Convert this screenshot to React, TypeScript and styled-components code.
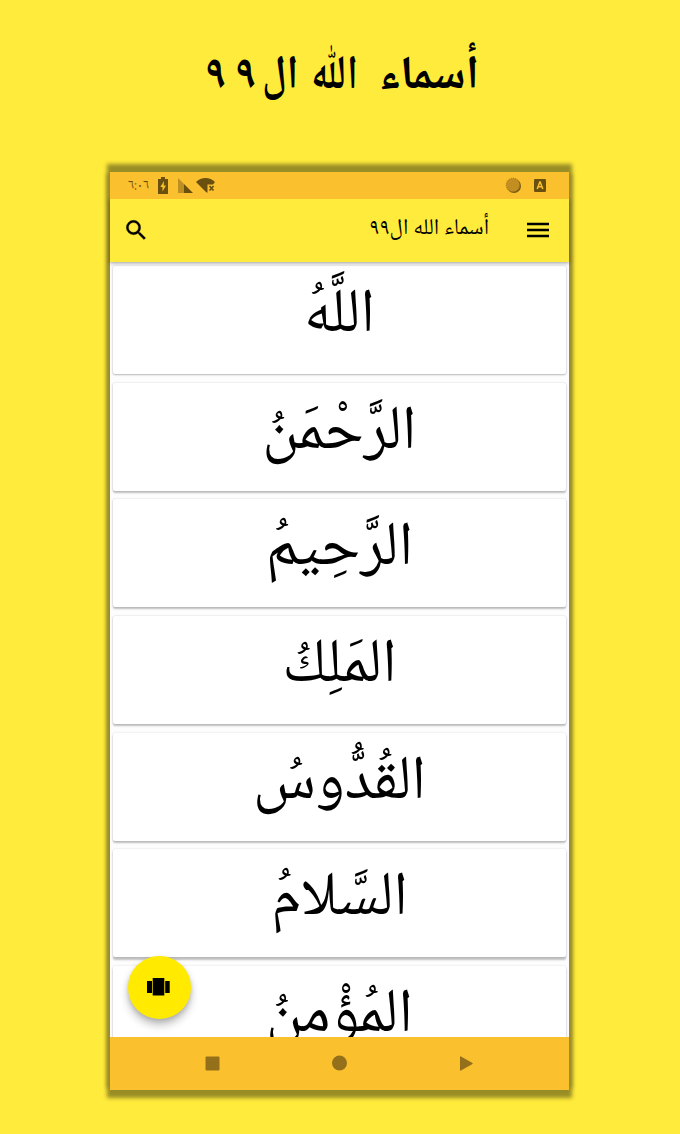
import React from "react";
import styled, { createGlobalStyle } from "styled-components";

const arabic = `"Noto Naskh Arabic", "Noto Sans Arabic", "DejaVu Sans", sans-serif`;

const Global = createGlobalStyle`
  *, *::before, *::after { box-sizing: border-box; }
  body { margin: 0; background: #ffeb3b; font-family: ${arabic}; color: #000; }
`;

const Page = styled.main`
  width: 680px;
  height: 1134px;
  overflow: hidden;
  background: #ffeb3b;
  display: flex;
  flex-direction: column;
`;

const Heading = styled.h1`
  margin: 0;
  height: 172px;
  padding: 33px 201px 0 0;
  display: flex;
  align-items: flex-start;
  font-size: 47px;
  line-height: 90px;
  white-space: nowrap;
`;

const Word = styled.span<{ $gap?: number; $squeeze?: number }>`
  margin-right: ${(p) => p.$gap ?? 0}px;
  transform: scaleX(${(p) => p.$squeeze ?? 1});
  transform-origin: right;
`;

const Phone = styled.section`
  position: relative;
  width: 459px;
  height: 918px;
  margin-left: 110px;
  display: flex;
  flex-direction: column;
  background: #fdfdfd;
  box-shadow: 0 -5px 4px 3px #998d26, 0 5px 4px 3px #998d26;
`;

const StatusBar = styled.div`
  position: relative;
  z-index: 2;
  height: 27px;
  flex: none;
  display: flex;
  align-items: center;
  padding: 0 22px 0 18px;
  background: #fbc02d;
  color: #69500f;
`;

const Clock = styled.span`
  width: 23px;
  padding-top: 2px;
  font-size: 13.5px;
  line-height: 25px;
  white-space: nowrap;
`;

const StatusIcon = styled.svg<{ $gap: number }>`
  flex: none;
  margin-left: ${(p) => p.$gap}px;
`;

const Spacer = styled.div`
  flex: 1;
`;

const AppBar = styled.header`
  height: 63px;
  flex: none;
  display: flex;
  align-items: center;
  padding: 0 20px 2px 13px;
  background: #ffeb3b;
  box-shadow: 0 1px 4px rgba(0, 0, 0, 0.4);
  z-index: 1;
`;

const SearchIcon = styled.svg`
  margin-top: 1px;
`;

const Title = styled.span`
  padding-bottom: 1px;
  margin-right: 38px;
  font-size: 22.5px;
  line-height: 40px;
  white-space: nowrap;
`;

const List = styled.div`
  flex: 1;
  min-height: 0;
  overflow: hidden;
  padding: 4px 3px 0;
  display: flex;
  flex-direction: column;
  gap: 8.7px;
`;

const Card = styled.article<{ $depth: number }>`
  flex: none;
  height: 108px;
  padding-top: 7px;
  text-align: center;
  font-size: 62px;
  line-height: 90px;
  white-space: nowrap;
  background: #fff;
  border-radius: 2px;
  box-shadow: 0 ${(p) => p.$depth}px 2px rgba(0, 0, 0, 0.24), 0 0 2px rgba(0, 0, 0, 0.16);
`;

const NavBar = styled.nav`
  height: 53px;
  flex: none;
  display: flex;
  align-items: center;
  justify-content: space-between;
  padding: 0 95px 1px;
  background: #fbc02d;
`;

const Fab = styled.button`
  position: absolute;
  left: 18px;
  top: 784px;
  width: 62.5px;
  height: 62.5px;
  padding: 0 1px 1px 0;
  border: 0;
  border-radius: 50%;
  display: grid;
  place-items: center;
  background: #ffea00;
  box-shadow: 0 6px 9px rgba(0, 0, 0, 0.25), 0 2px 4px rgba(0, 0, 0, 0.12);
`;

const names = [
  { text: "اللَّهُ", depth: 1 },
  { text: "الرَّحْمَنُ", depth: 1.2 },
  { text: "الرَّحِيمُ", depth: 1.5 },
  { text: "المَلِكُ", depth: 1.7 },
  { text: "القُدُّوسُ", depth: 2 },
  { text: "السَّلامُ", depth: 2.2 },
  { text: "المُؤْمِنُ", depth: 2.4 },
];

export default function App() {
  return (
    <Page>
      <Global />
      <Heading dir="rtl">
        <Word>أسماء</Word>
        <Word $gap={21} $squeeze={0.79}>اللّٰه</Word>
        <Word $gap={1} $squeeze={0.86}>ال</Word>
        <Word $gap={-1}>٩</Word>
        <Word $gap={7}>٩</Word>
      </Heading>
      <Phone>
        <StatusBar>
          <Clock dir="ltr">٦:٠٦</Clock>
          <StatusIcon $gap={7} width="10" height="17" viewBox="0 0 10 17">
            <path fill="currentColor" d="M3 0h4v2h3v15H0V2h3z" />
            <path fill="#fbc02d" d="M6 4 2.3 10h2.2v4.5L8 8.5H5.7z" />
          </StatusIcon>
          <StatusIcon $gap={10} width="16" height="16" viewBox="0 0 16 16">
            <path fill="#bd8f22" d="M0 0 6 6v9H0z" />
            <path fill="currentColor" d="m6 6 9 9H6z" />
          </StatusIcon>
          <StatusIcon $gap={2} width="20" height="17" viewBox="0 0 20 17">
            <path fill="currentColor" d="M0 5C5-.2 14-.2 19 5L17 7.500h-5.500v8h-1z" />
            <path stroke="currentColor" strokeWidth="1.700" d="m13.500 9 4 4.500m0-4.500-4 4.500" />
          </StatusIcon>
          <Spacer />
          <StatusIcon $gap={0} width="17" height="17" viewBox="0 0 17 17">
            <circle cx="9" cy="9" r="7" fill="#765b13" />
            <circle cx="8" cy="8" r="6.800" fill="#c28e21" stroke="#98711a" strokeDasharray="1 1" />
          </StatusIcon>
          <StatusIcon $gap={12} width="13" height="13" viewBox="0 0 13 13">
            <rect width="12" height="13" rx="1.200" fill="currentColor" />
            <path d="m3.200 10 2.600-7h.4l2.600 7M4.200 7.800h3.600" fill="none" stroke="#fbc02d" strokeWidth="1.500" />
          </StatusIcon>
        </StatusBar>
        <AppBar>
          <SearchIcon width="26.500" height="26.500" viewBox="0 0 24 24" stroke="#000" strokeWidth=".3">
            <path d="M15.500 14h-.79l-.28-.27A6.471 6.471 0 0 0 16 9.500 6.500 6.500 0 1 0 9.500 16c1.610 0 3.090-.59 4.230-1.570l.27.28v.79l5 4.990L20.490 19l-4.990-5zm-6 0C7.010 14 5 11.990 5 9.500S7.010 5 9.500 5 14 7.010 14 9.500 11.990 14 9.500 14z" />
          </SearchIcon>
          <Spacer />
          <Title dir="rtl">أسماء الله ال٩٩</Title>
          <svg width="22" height="16" viewBox="0 0 22 16" stroke="#000" strokeWidth="2.400">
            <path d="M0 2h22M0 8h22M0 14h22" />
          </svg>
        </AppBar>
        <List>
          {names.map((n) => (
            <Card key={n.text} $depth={n.depth} dir="rtl">
              {n.text}
            </Card>
          ))}
        </List>
        <NavBar>
          <svg width="15" height="15" viewBox="0 0 15 15" fill="#95701a">
            <rect x=".5" y=".5" width="14" height="14" rx="1" />
          </svg>
          <svg width="16" height="16" viewBox="0 0 16 16" fill="#95701a">
            <circle cx="7.500" cy="8" r="7.500" />
          </svg>
          <svg width="15" height="15" viewBox="0 0 15 15" fill="#95701a">
            <path d="M1 1q0-1 1-.5l11.500 6.500q.5.500 0 1L2 14.500q-1 .5-1-.5z" />
          </svg>
        </NavBar>
        <Fab aria-label="carousel">
          <svg width="23" height="18" viewBox="0 0 23 18">
            <path d="M0 3h5v12H0zM5.700 0h11.600v17.500H5.700zM18.200 3h4.500v12h-4.500z" />
          </svg>
        </Fab>
      </Phone>
    </Page>
  );
}
